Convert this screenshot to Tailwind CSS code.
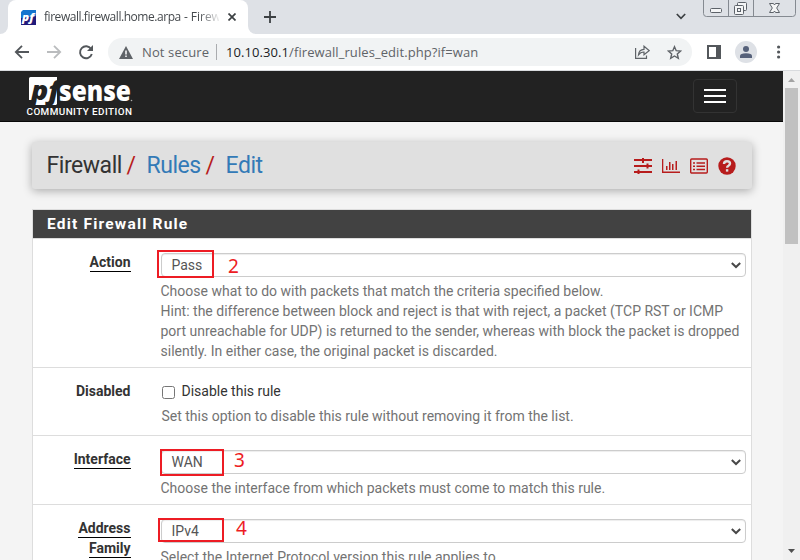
<!DOCTYPE html>
<html lang="en">
<head>
<meta charset="utf-8">
<title>firewall.firewall.home.arpa - Firewall: Rules: Edit</title>
<script src="https://cdn.jsdelivr.net/npm/@tailwindcss/browser@4"></script>
</head>
<body class="w-[800px] h-[560px] overflow-hidden bg-[#f4f4f4] font-['Roboto',sans-serif] text-sm text-[#333]">
<div class="flex flex-col h-[560px] w-[800px] overflow-hidden">

  <!-- Tab strip -->
  <div class="flex h-[34px] shrink-0 bg-[#dee1e6] font-['Open_Sans',sans-serif]">
    <div class="w-2 bg-white"><div class="h-full bg-[#dee1e6] rounded-br-lg"></div></div>
    <div class="flex items-center w-[240px] bg-white rounded-t-lg pl-[13px]">
      <svg class="w-[15px] h-[15px] shrink-0" viewBox="0 0 15 15"><path d="M2 0H15V13L13 15H0V2Z" fill="#1475cf"/><path d="M0 8L15 6V15H0Z" fill="#211b7b"/><text x="1" y="11" font-family="Open Sans" font-size="11" font-weight="800" font-style="italic" fill="#fff" textLength="12" lengthAdjust="spacingAndGlyphs">pf</text></svg>
      <span class="ml-2 w-[175px] overflow-hidden whitespace-nowrap text-[12px] tracking-[-0.02px] text-[#45494d] [mask-image:linear-gradient(to_right,#000_155px,transparent_177px)]"><span class="tracking-[-0.45px]">firewall.firewall.home.arpa</span> - Firew</span>
      <svg class="ml-[9px] w-2 h-2" viewBox="0 0 8 8"><path d="M.5 .5L7.5 7.5M7.5 .5L.5 7.5" stroke="#3c4043" stroke-width="1.7"/></svg>
    </div>
    <div class="w-2 bg-white"><div class="h-full bg-[#dee1e6] rounded-bl-lg"></div></div>
    <svg class="ml-2 mt-[11px] w-3 h-3" viewBox="0 0 12 12"><path d="M6 0V12M0 6H12" stroke="#3c4043" stroke-width="1.8"/></svg>
    <svg class="ml-[400px] mt-[13px] w-[10px] h-[7px]" viewBox="0 0 10 7"><path d="M.8 1L5 5.3L9.2 1" fill="none" stroke="#3c4043" stroke-width="1.7"/></svg>
    <svg class="ml-[17px] w-[94px] h-[18px]" viewBox="0 0 94 18" fill="none" stroke="#858a91">
      <path d="M.5 0V13.5Q.5 16.5 3.5 16.5H89.5Q92.500 16.500 92.500 13.500V0M25.500 0V16M50.500 0V16"/>
      <g stroke="#5d6269" fill="#f4f5f6"><rect x="7.500" y="8.500" width="11" height="4" rx="1"/><rect x="34.500" y="2.500" width="9" height="8" rx="1"/><rect x="31.500" y="5.500" width="9" height="9" rx="1"/><rect x="34.500" y="8.500" width="3" height="3"/><path d="M66.500 3.500H70.500L71.500 5L72.500 3.500H76.500L73.700 8L76.500 12.500H72.500L71.500 11L70.500 12.500H66.500L69.300 8Z"/></g>
    </svg>
  </div>

  <!-- Address bar -->
  <div class="flex items-center h-[37px] shrink-0 bg-white border-b border-[#d9dbde] font-['Open_Sans',sans-serif] text-[#5f6368]">
    <svg class="ml-[14px] w-[16px] h-[14px]" viewBox="0 0 16 14" fill="none" stroke="#53575b" stroke-width="1.8"><path d="M15 7H2M8 .8L1.800 7L8 13.200"/></svg>
    <svg class="ml-[16px] w-[16px] h-[14px]" viewBox="0 0 16 14" fill="none" stroke="#babcbe" stroke-width="1.8"><path d="M1 7H14M8 .8L14.200 7L8 13.200"/></svg>
    <svg class="ml-[16px] w-[16px] h-[16px]" viewBox="0 0 16 16"><path d="M13.100 5A6 6 0 1 0 13.800 10" fill="none" stroke="#53575b" stroke-width="1.900"/><path d="M15 1V7H9Z" fill="#53575b"/></svg>
    <div class="ml-[14px] flex h-7 w-[584px] items-center rounded-full bg-[#f1f3f4] pl-[11px]">
      <svg class="w-[14px] h-[13px]" viewBox="0 0 14 13"><path d="M7 0L14 13H0Z" fill="#5f6368"/><path d="M7 4.500V8.500M7 9.500V11" stroke="#fff" stroke-width="1.500"/></svg>
      <span class="ml-[9px] w-[67px] whitespace-nowrap text-[13px] tracking-[0.12px]">Not secure</span>
      <span class="ml-[7px] h-4 w-px bg-[#aaacaf]"></span>
      <span class="ml-[9px] whitespace-nowrap text-[13px] tracking-[0.08px]"><span class="text-[#202124]">10.10.30.1</span>/firewall_rules_edit.php?if=wan</span>
      <svg class="ml-auto w-[15px] h-[14px]" viewBox="0 0 15 14" fill="none" stroke="#5f6368" stroke-width="1.200"><path d="M.6 3V13.300H11.500V10.500M3.500 9.800Q4 4.500 9 4.300V1.200L14.100 5.600L9 9.800V7Q5.500 6.900 3.500 9.800Z"/></svg>
      <svg class="ml-[17px] mr-[10px] w-[15px] h-[15px]" viewBox="0 0 15 15" fill="none" stroke="#5f6368" stroke-width="1.400"><path d="M7.500 1.700L9.200 5.700L13.600 6.100L10.300 9L11.300 13.300L7.500 11L3.700 13.300L4.700 9L1.400 6.100L5.800 5.700Z"/></svg>
    </div>
    <svg class="ml-[15px] w-[14px] h-[14px]" viewBox="0 0 14 14"><path d="M0 0H14V14H0ZM2 2V12H9V2Z" fill="#53575b" fill-rule="evenodd"/></svg>
    <svg class="ml-[14px] w-[22px] h-[22px]" viewBox="0 0 22 22"><circle cx="11" cy="11" r="11" fill="#dee1e6"/><circle cx="11" cy="8" r="3" fill="#56617a"/><path d="M5 17V15Q5 12.300 11 12.300T17 15V17Z" fill="#56617a"/></svg>
    <svg class="ml-[20px] w-[4px] h-[14px]" viewBox="0 0 4 14" fill="#53575b"><circle cx="1.600" cy="2" r="1.600"/><circle cx="1.600" cy="7" r="1.600"/><circle cx="1.600" cy="12" r="1.600"/></svg>
  </div>

  <div class="flex h-[489px]">
    <main class="w-[783px] overflow-hidden">
      <nav class="flex h-[51px] items-center justify-between border-b border-[#080808] bg-[#222] pl-[26px] pr-[46px]">
        <svg class="w-[108px] h-[42px]" viewBox="0 0 108 42">
          <path d="M4.500 2H31V29L30 30H7L8 25H3V3.500Q3 2 4.500 2Z" fill="#fff"/>
          <text x="5" y="24.500" font-family="Open Sans" font-weight="800" font-style="italic" font-size="27" textLength="29" lengthAdjust="spacingAndGlyphs" fill="#222">pf</text>
          <text x="33" y="25.500" font-family="Open Sans" font-weight="800" font-size="28" textLength="72" lengthAdjust="spacingAndGlyphs" fill="#fff">sense</text>
          <circle cx="105.500" cy="25.500" r=".8" fill="#aaa"/>
          <text x="0.500" y="39.500" font-family="Roboto" font-weight="500" font-size="9.900" textLength="105.500" fill="#fff">COMMUNITY EDITION</text>
        </svg>
        <div class="flex h-[34px] w-11 flex-col items-center justify-center gap-1 rounded border border-[#333]">
          <span class="h-0.5 w-[22px] bg-white"></span><span class="h-0.5 w-[22px] bg-white"></span><span class="h-0.5 w-[22px] bg-white"></span>
        </div>
      </nav>

      <header class="mt-5 ml-8 flex h-[47px] w-[720px] items-center rounded-[3px] bg-[#e0e0e0] pl-[14.5px] pr-4 pt-[2px] text-[23px] tracking-[-0.45px] shadow-[0_2px_10px_rgba(0,0,0,0.3)]">
        <span class="w-[75px] whitespace-nowrap">Firewall</span>
        <span class="ml-[5px] w-[20px] text-[#b71c1c]">/</span>
        <span class="w-[54px] whitespace-nowrap text-[#337ab7]">Rules</span>
        <span class="ml-[5px] w-[20px] text-[#b71c1c]">/</span>
        <span class="whitespace-nowrap text-[#337ab7]">Edit</span>
        <div class="ml-auto -mt-[2px] flex items-center gap-[10px]">
          <svg class="w-[18px] h-[16px]" viewBox="0 0 18 16" fill="#b71c1c"><path d="M0 1H18V3H0ZM0 7H18V9H0ZM0 13H18V15H0ZM8 0H10V5H8ZM12.500 5.500H14.500V10.500H12.500ZM3.500 11.500H5.500V16H3.500Z"/></svg>
          <svg class="w-[18px] h-[16px]" viewBox="0 0 18 16" fill="#b71c1c"><path d="M0 1H1.300V13.500H18V15H0ZM4 8H5.500V12H4ZM7 4H8.500V12H7ZM10 6H11.500V12H10ZM13.500 3H15V12H13.500Z"/></svg>
          <svg class="w-[18px] h-[16px]" viewBox="0 0 18 16"><rect x=".7" y="1" width="16.600" height="14" rx="1" fill="none" stroke="#b71c1c" stroke-width="1.400"/><path d="M3 5H5M6.500 5H15M3 8.200H5M6.500 8.200H15M3 11.500H5M6.500 11.500H15" stroke="#b71c1c" stroke-width="1.500"/></svg>
          <svg class="w-[18px] h-[18px]" viewBox="0 0 18 18"><circle cx="9" cy="9" r="8.700" fill="#b71c1c"/><path d="M6 7Q6 4.200 9 4.200T12 6.600Q12 7.900 10.500 8.700Q9.100 9.400 9.100 10.800" fill="none" stroke="#e0e0e0" stroke-width="2.400"/><rect x="7.900" y="12.200" width="2.400" height="2.400" fill="#e0e0e0"/></svg>
        </div>
      </header>

      <section class="mt-5 ml-8 w-[720px] border border-[#ddd] bg-white">
        <h2 class="h-[28px] bg-[#424242] pl-[14px] text-[15.5px] leading-[28px] font-bold tracking-[1.2px] text-white">Edit Firewall Rule</h2>

        <div class="flex h-[129px] border-t border-[#ddd] pt-[14px]">
          <div class="-mt-px w-[97.5px] text-right font-bold leading-5"><span class="border-b border-black inline-block leading-[17px]">Action</span></div>
          <div class="relative ml-[30.5px] w-[585px]">
            <div class="flex h-6 items-center justify-between rounded border border-[#ccc] pl-[9.5px] pr-1 text-[#555] shadow-[inset_0_1px_1px_rgba(0,0,0,0.075)]"><span>Pass</span><svg class="w-[10px] h-[7px]" viewBox="0 0 10 7"><path d="M.8 1L5 5L9.200 1" fill="none" stroke="#484848" stroke-width="2"/></svg></div>
            <p class="mt-1 -ml-[0.5px] w-[590px] whitespace-nowrap leading-5 text-[#737373]">Choose what to do with packets that match the criteria specified below.<br>Hint: the difference between block and reject is that with reject, a packet (TCP RST or ICMP<br>port unreachable for UDP) is returned to the sender, whereas with block the packet is dropped<br>silently. In either case, the original packet is discarded.</p>
            <div class="absolute -top-[3px] -left-1 h-7 w-[57px] border-2 border-[#ed1c24]"></div>
            <span class="absolute top-[1px] left-[67px] font-['Noto_Sans',sans-serif] text-[19px] leading-6 text-[#ed1c24]">2</span>
          </div>
        </div>

        <div class="flex h-[68px] border-t border-[#ddd] pt-[13px]">
          <div class="w-[97.5px] text-right font-bold leading-5">Disabled</div>
          <div class="ml-[31.5px]">
            <div class="flex h-5 items-center gap-[6.5px]"><span class="mt-[2px] h-[13px] w-[13px] rounded-[2.5px] border border-[#767676]"></span><span>Disable this rule</span></div>
            <p class="mt-[5px] -ml-[0.5px] whitespace-nowrap leading-5 text-[#737373]">Set this option to disable this rule without removing it from the list.</p>
          </div>
        </div>

        <div class="flex h-[69px] border-t border-[#ddd] pt-[14px]">
          <div class="-mt-px w-[97.5px] text-right font-bold leading-5"><span class="border-b border-black inline-block leading-[17px]">Interface</span></div>
          <div class="relative ml-[30.5px] w-[585px]">
            <div class="flex h-6 items-center justify-between rounded border border-[#ccc] pl-[9.5px] pr-1 text-[#555] shadow-[inset_0_1px_1px_rgba(0,0,0,0.075)]"><span>WAN</span><svg class="w-[10px] h-[7px]" viewBox="0 0 10 7"><path d="M.8 1L5 5L9.200 1" fill="none" stroke="#484848" stroke-width="2"/></svg></div>
            <p class="mt-1 -ml-[0.5px] whitespace-nowrap leading-5 text-[#737373]">Choose the interface from which packets must come to match this rule.</p>
            <div class="absolute -top-[1px] -left-[1px] h-[27px] w-16 border-2 border-[#ed1c24]"></div>
            <span class="absolute -top-[2px] left-[73px] font-['Noto_Sans',sans-serif] text-[19px] leading-6 text-[#ed1c24]">3</span>
          </div>
        </div>

        <div class="flex h-[90px] border-t border-[#ddd] pt-[14px]">
          <div class="-mt-px w-[97.5px] text-right font-bold leading-5"><span class="border-b border-black inline-block leading-[17px]">Address</span><br><span class="border-b border-black inline-block leading-[17px]">Family</span></div>
          <div class="relative ml-[30.5px] w-[585px]">
            <div class="flex h-6 items-center justify-between rounded border border-[#ccc] pl-[9.5px] pr-1 text-[#555] shadow-[inset_0_1px_1px_rgba(0,0,0,0.075)]"><span>IPv4</span><svg class="w-[10px] h-[7px]" viewBox="0 0 10 7"><path d="M.8 1L5 5L9.200 1" fill="none" stroke="#484848" stroke-width="2"/></svg></div>
            <p class="mt-1 -ml-[0.5px] whitespace-nowrap leading-5 text-[#737373]">Select the Internet Protocol version this rule applies to.</p>
            <div class="absolute -top-[1px] -left-[3px] h-6 w-[66px] border-2 border-[#ed1c24]"></div>
            <span class="absolute -top-[3px] left-[75px] font-['Noto_Sans',sans-serif] text-[19px] leading-6 text-[#ed1c24]">4</span>
          </div>
        </div>
      </section>
    </main>

    <!-- Scrollbar -->
    <aside class="flex w-[17px] flex-col bg-[#f0f0f0] pl-[2px]">
      <svg class="ml-[3px] mt-[7px] h-[4px] w-[7px]" viewBox="0 0 7 4"><path d="M3.500 0L7 4H0Z" fill="#a3a3a3"/></svg>
      <div class="mt-[6px] h-[156px] w-[13px] bg-[#c1c1c1]"></div>
      <svg class="mt-auto mb-[7px] ml-[3px] h-[4px] w-[7px]" viewBox="0 0 7 4"><path d="M0 0H7L3.500 4Z" fill="#505050"/></svg>
    </aside>
  </div>
</div>
</body>
</html>
